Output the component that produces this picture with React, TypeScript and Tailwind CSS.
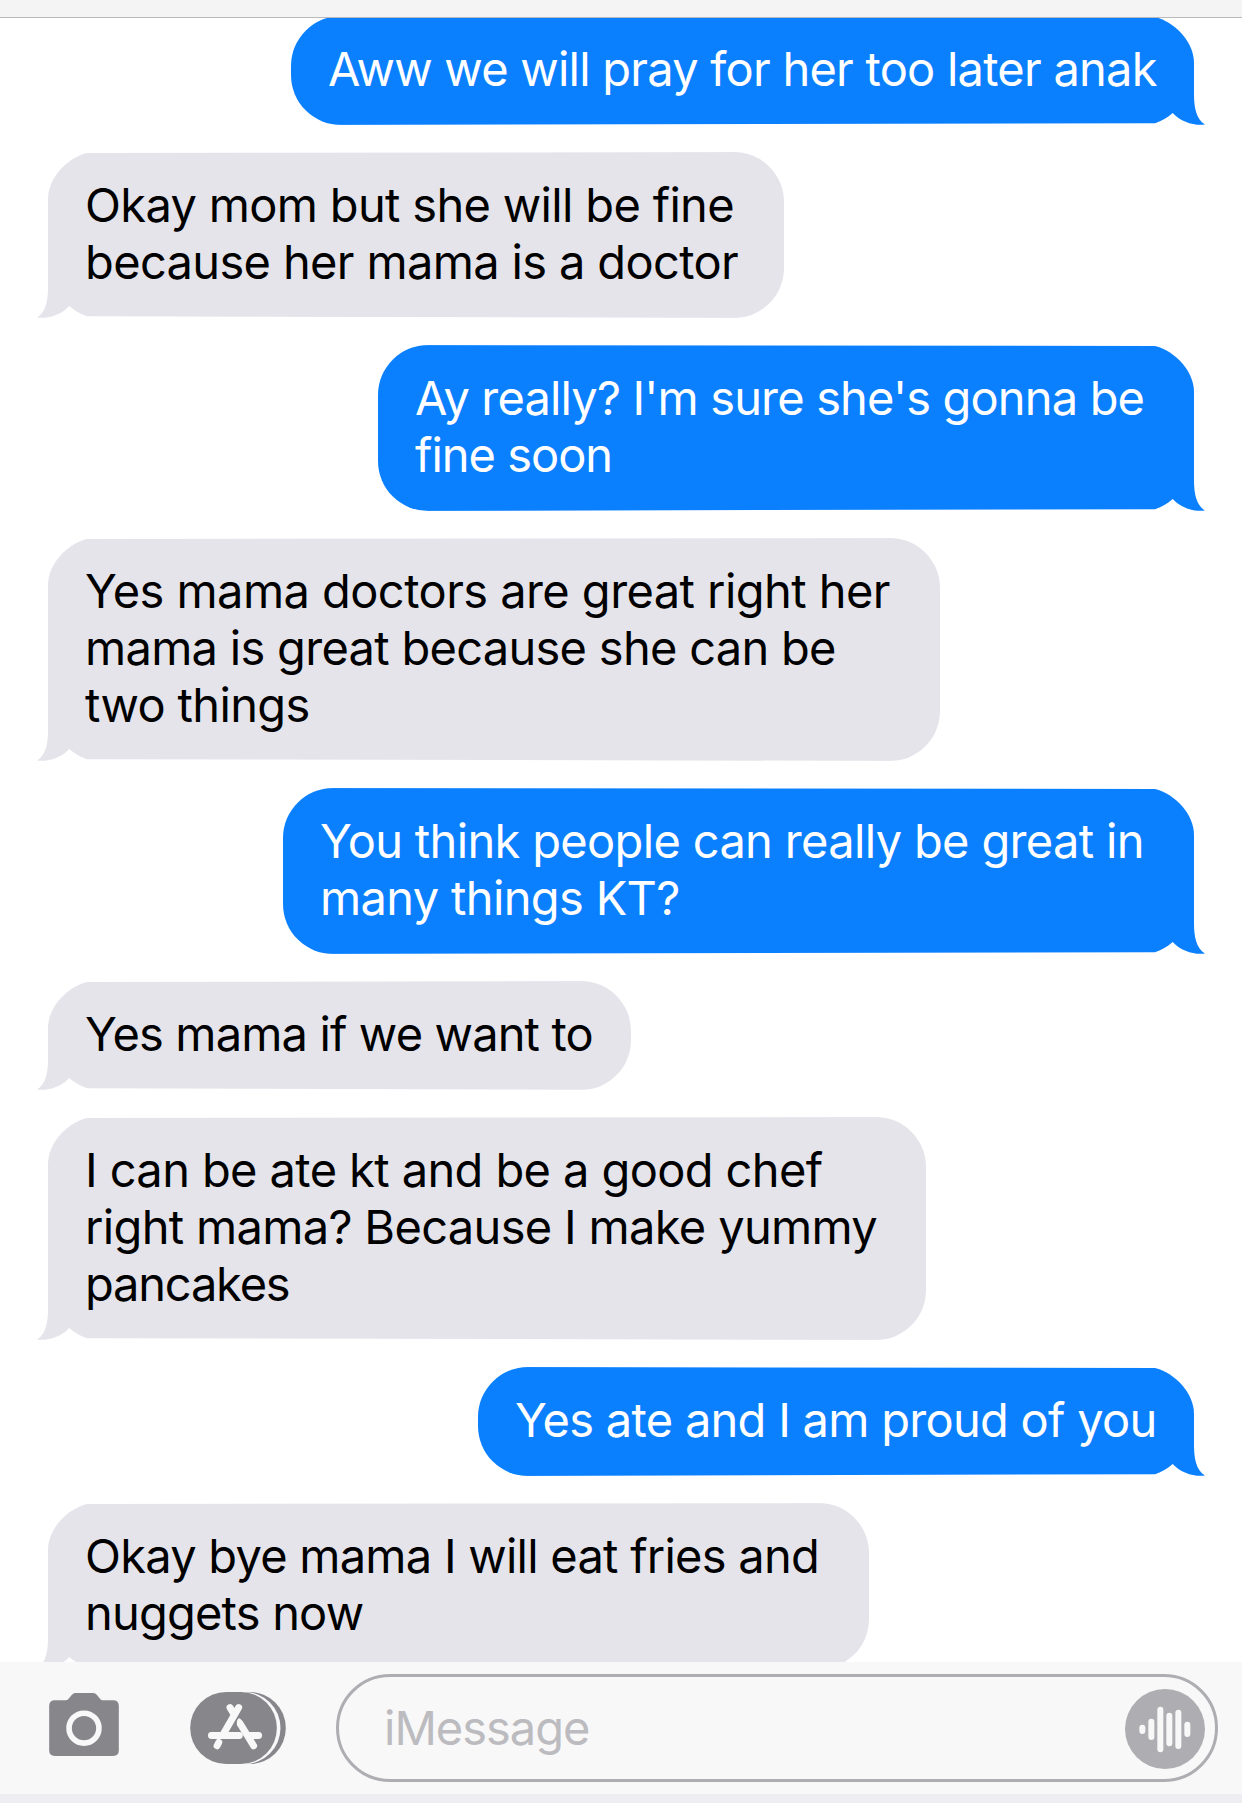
import React from 'react';

type Message = { from: 'me' | 'them'; width: string; lines: [string, string][] };

const messages: Message[] = [
  { from: 'me', width: 'w-[903px]', lines: [['Aww we will pray for her too later anak', 'tracking-[-0.76px]']] },
  {
    from: 'them',
    width: 'w-[736px]',
    lines: [
      ['Okay mom but she will be fine', 'tracking-[-0.67px]'],
      ['because her mama is a doctor', 'tracking-[-0.65px]'],
    ],
  },
  {
    from: 'me',
    width: 'w-[816px]',
    lines: [
      ["Ay really? I'm sure she's gonna be", 'tracking-[-0.84px]'],
      ['fine soon', 'tracking-[-1px]'],
    ],
  },
  {
    from: 'them',
    width: 'w-[892px]',
    lines: [
      ['Yes mama doctors are great right her', 'tracking-[-0.56px]'],
      ['mama is great because she can be', 'tracking-[-0.71px]'],
      ['two things', 'tracking-[-0.64px]'],
    ],
  },
  {
    from: 'me',
    width: 'w-[911px]',
    lines: [
      ['You think people can really be great in', 'tracking-[-0.66px]'],
      ['many things KT?', 'tracking-[-0.65px]'],
    ],
  },
  { from: 'them', width: 'w-[583px]', lines: [['Yes mama if we want to', 'tracking-[-0.85px]']] },
  {
    from: 'them',
    width: 'w-[878px]',
    lines: [
      ['I can be ate kt and be a good chef', 'tracking-[-0.6px]'],
      ['right mama? Because I make yummy', 'tracking-[-0.67px]'],
      ['pancakes', 'tracking-[-1.2px]'],
    ],
  },
  { from: 'me', width: 'w-[716px]', lines: [['Yes ate and I am proud of you', 'tracking-[-0.72px]']] },
  {
    from: 'them',
    width: 'w-[821px]',
    lines: [
      ['Okay bye mama I will eat fries and', 'tracking-[-0.75px]'],
      ['nuggets now', 'tracking-[-0.8px]'],
    ],
  },
];

/* Tail edge, drawn for a sent bubble and mirrored for a received one. */
function TailEdge({ mine }: { mine: boolean }) {
  return (
    <div
      className={
        mine
          ? 'absolute inset-y-0 -right-[11px] flex w-[50px] flex-col text-[#0b80ff]'
          : 'absolute inset-y-0 -left-[11px] flex w-[50px] -scale-x-100 flex-col text-[#e5e4eb]'
      }
    >
      <svg className="block h-[50px] w-[50px]" viewBox="0 0 50 50" fill="currentColor">
        <path d="M0 1 C20 6 39 26 39 47 V50 H0Z" />
      </svg>
      <div className="mr-[11px] flex-1 bg-current" />
      <svg className="block h-[50px] w-[50px]" viewBox="0 0 50 50" fill="currentColor">
        <path d="M0 0 H39 V19 C39 32 41 44 50 49.6 C39 51 26 47 17.7 38 C12 43 6 46 0 48.2Z" />
      </svg>
    </div>
  );
}

function Bubble({ from, width, lines }: Message) {
  const mine = from === 'me';
  return (
    <div className={`relative ${width} px-[37px] pt-6 pb-7 ${mine ? 'self-end' : 'self-start'}`}>
      <div
        className={
          mine
            ? 'absolute inset-y-0 left-0 right-[39px] rounded-l-[50px] bg-[#0b80ff] [clip-path:polygon(0_0,100%_1px,100%_calc(100%-1.8px),0_100%)]'
            : 'absolute inset-y-0 left-[39px] right-0 rounded-r-[50px] bg-[#e5e4eb] [clip-path:polygon(0_1px,100%_0,100%_100%,0_calc(100%-1.8px))]'
        }
      />
      <TailEdge mine={mine} />
      <div className={`relative text-[47px] leading-[57px] ${mine ? 'text-white' : 'text-black'}`}>
        {lines.map(([text, tracking]) => (
          <p key={text} className={`whitespace-nowrap ${tracking}`}>
            {text}
          </p>
        ))}
      </div>
    </div>
  );
}

function CameraIcon() {
  return (
    <svg className="h-[63px] w-[70px]" viewBox="147 158 210 190">
      <path
        fill="#86868b"
        d="M164 180 H197 Q203 180 207 174 Q213 165 219 160 Q222 158 227 158 H279 Q284 158 287 160 Q292 164 299 174 Q303 180 308 180 H340 Q357 180 357 197 V331 Q357 348 340 348 H164 Q147 348 147 331 V197 Q147 180 164 180Z"
      />
      <circle cx="252" cy="264" r="45" fill="none" stroke="#f8f8f9" strokeWidth="17" />
    </svg>
  );
}

function AppsIcon() {
  return (
    <svg className="h-[72px] w-[96px]" viewBox="570 155 288 217">
      <rect x="590" y="155" width="268" height="217" rx="108" fill="#86868b" />
      <rect x="560" y="155" width="282" height="217" rx="108" fill="#f8f8f9" />
      <rect x="570" y="155" width="261" height="217" rx="108" fill="#86868b" />
      <g stroke="#f8f8f9" strokeWidth="21" strokeLinecap="round" fill="none">
        <path d="M634 286 H718" />
        <path d="M750 286 H776" />
        <path d="M716 202 L669 283" />
        <path d="M690 202 L701 220" />
        <path d="M656 307 L651 317" />
        <path d="M722 253 L761 317" />
      </g>
      <path fill="#f8f8f9" d="M714 236 C718 232 722 236 730 246 L712 258 C709 248 710 241 714 236Z" />
    </svg>
  );
}

function VoiceIcon() {
  return (
    <svg className="mt-0.5 h-20 w-20" viewBox="135 147 240 240">
      <circle cx="255" cy="267" r="120" fill="#aeaeb2" />
      <g stroke="#f8f8f9" strokeWidth="18" strokeLinecap="round">
        <path d="M187 263V273M214 245V291M241 209V328M268 227V310M295 218V318M322 254V282" />
      </g>
    </svg>
  );
}

export default function App() {
  return (
    <div className="flex h-[1803px] w-[1242px] flex-col overflow-hidden bg-white font-['Inter',sans-serif]">
      <header className="h-[18px] shrink-0 border-b border-[#b9b9bb] bg-[#f4f4f5]" />
      <main className="h-[1644px] shrink-0 overflow-hidden">
        <div className="-mt-[2px] flex flex-col gap-[27px] pr-12 pl-12">
          {messages.map((m) => (
            <Bubble key={m.lines[0][0]} {...m} />
          ))}
        </div>
      </main>
      <footer className="flex h-[132px] shrink-0 items-start bg-[#f8f8f9] pt-3 pr-6 pl-[49px]">
        <div className="mt-[19px]">
          <CameraIcon />
        </div>
        <div className="mt-[18px] ml-[71px]">
          <AppsIcon />
        </div>
        <div className="ml-[50px] flex h-[108px] flex-1 items-center justify-between rounded-full border-3 border-[#aeaeb2] pr-[10px] pl-[45px]">
          <span className="text-[47px] tracking-[-1px] text-[#bcbcc0]">iMessage</span>
          <VoiceIcon />
        </div>
      </footer>
      <div className="flex-1 bg-[#eeeef2]" />
    </div>
  );
}
